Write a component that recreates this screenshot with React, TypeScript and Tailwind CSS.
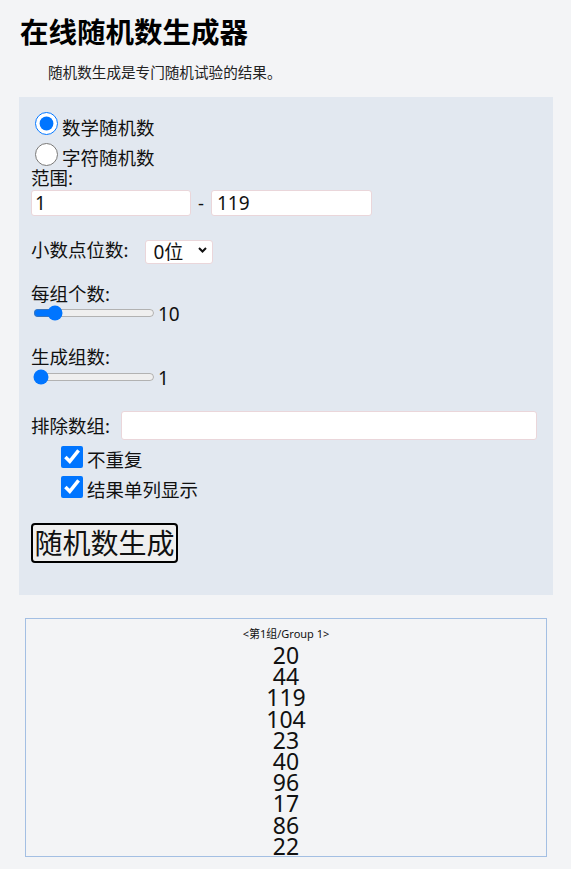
import { useState } from "react";

const numbers = [20, 44, 119, 104, 23, 40, 96, 17, 86, 22];

export default function App() {
  const [kind, setKind] = useState("math");
  const [count, setCount] = useState(10);
  const [groups, setGroups] = useState(1);

  return (
    <div className="min-h-[869px] bg-[#f3f4f6] font-['Noto_Sans','Noto_Sans_CJK_SC',sans-serif] text-[#111]">
      <div className="px-[19px] pt-[14px]">
        <h1 className="pl-[1px] text-[28.5px] font-bold leading-[36px] text-black">在线随机数生成器</h1>
        <p className="mt-[12px] pl-[29px] text-[14.6px] leading-[20px] text-[#222]">
          随机数生成是专门随机试验的结果。
        </p>

        <div className="mt-[15px] w-[534px] bg-[#e2e8f0] pb-[32px] pl-[12px] pt-[14px] text-[18.5px]">
          <label className="flex h-[31px] items-start">
            <input
              type="radio"
              name="kind"
              checked={kind === "math"}
              onChange={() => setKind("math")}
              className="m-0 ml-[4px] mt-[1px] h-[23px] w-[23px]"
            />
            <span className="ml-[4px] mt-[6px] leading-[22px]">数学随机数</span>
          </label>
          <label className="flex h-[25px] items-start">
            <input
              type="radio"
              name="kind"
              checked={kind === "char"}
              onChange={() => setKind("char")}
              className="m-0 ml-[4px] mt-[1px] h-[23px] w-[23px]"
            />
            <span className="ml-[4px] mt-[5px] leading-[22px]">字符随机数</span>
          </label>

          <div className="leading-[22px]">范围:</div>
          <div className="mt-[1px] flex h-[26px] items-center">
            <input
              defaultValue="1"
              className="h-[26px] w-[160px] rounded-[3px] border border-[#ead6da] bg-white px-[3px] text-[19px] outline-none"
            />
            <span className="w-[20px] text-center">-</span>
            <input
              defaultValue="119"
              className="h-[26px] w-[161px] rounded-[3px] border border-[#ead6da] bg-white px-[5px] text-[19px] outline-none"
            />
          </div>

          <div className="mt-[22px] flex h-[24px] items-center">
            <span>小数点位数:</span>
            <div className="relative ml-[17px] h-[24px] w-[68px]">
              <select className="h-[24px] w-[68px] appearance-none rounded-[3px] border border-[#ead6da] bg-white pl-[7px] text-[19px] leading-[22px] outline-none">
                <option>0位</option>
                <option>1位</option>
                <option>2位</option>
              </select>
              <svg
                className="pointer-events-none absolute right-[6px] top-[9px]"
                width="9"
                height="6"
                viewBox="0 0 9 6"
              >
                <polyline points="1,1 4.5,4.5 8,1" fill="none" stroke="#111" strokeWidth="2" />
              </svg>
            </div>
          </div>

          <div className="mt-[21px] leading-[22px]">每组个数:</div>
          <div className="flex h-[16px] items-center">
            <input
              type="range"
              min={1}
              max={70}
              value={count}
              onChange={(e) => setCount(Number(e.target.value))}
              className="m-0 ml-[2px] h-[16px] w-[122px]"
            />
            <span className="ml-[3px] mt-[3px] text-[19px]">{count}</span>
          </div>

          <div className="mt-[25px] leading-[22px]">生成组数:</div>
          <div className="mt-[1px] flex h-[16px] items-center">
            <input
              type="range"
              min={1}
              max={70}
              value={groups}
              onChange={(e) => setGroups(Number(e.target.value))}
              className="m-0 ml-[2px] h-[16px] w-[122px]"
            />
            <span className="ml-[3px] mt-[3px] text-[19px]">{groups}</span>
          </div>

          <div className="mt-[26px] flex h-[29px] items-center">
            <span>排除数组:</span>
            <input className="ml-[11px] h-[29px] w-[416px] rounded-[3px] border border-[#ead6da] bg-white outline-none" />
          </div>

          <label className="mt-[6px] flex h-[30px] items-start">
            <input type="checkbox" defaultChecked className="m-0 ml-[30px] h-[22px] w-[22px]" />
            <span className="ml-[4px] mt-[3px] leading-[22px]">不重复</span>
          </label>
          <label className="flex h-[22px] items-start">
            <input type="checkbox" defaultChecked className="m-0 ml-[30px] h-[22px] w-[22px]" />
            <span className="ml-[4px] mt-[3px] leading-[22px]">结果单列显示</span>
          </label>

          <button
            type="button"
            className="mt-[25px] h-[40px] w-[147px] rounded-[4px] border-2 border-black bg-[#efefef] text-[28px] leading-[36px]"
          >
            随机数生成
          </button>
        </div>

        <div className="ml-[6px] mt-[23px] h-[239px] w-[522px] overflow-hidden border border-[#a3bfe3] pt-[8px] text-center">
          <div className="text-[11px] leading-[14px]">&lt;第1组/Group 1&gt;</div>
          <div className="mt-[4px]">
            {numbers.map((n, i) => (
              <div key={i} className="text-[23px] leading-[21.2px]">
                {n}
              </div>
            ))}
          </div>
        </div>
      </div>
    </div>
  );
}
